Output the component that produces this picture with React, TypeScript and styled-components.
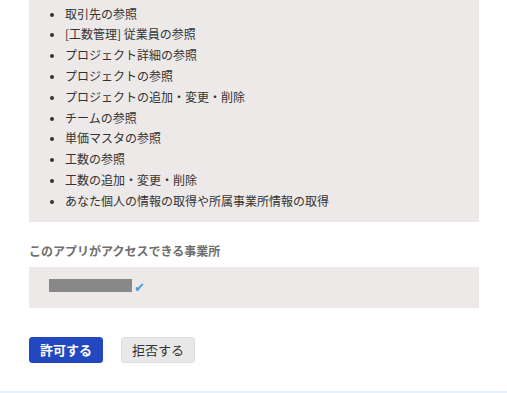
import React from 'react'
import styled, { createGlobalStyle } from 'styled-components'

const GlobalStyle = createGlobalStyle`
  html, body {
    margin: 0;
    padding: 0;
    background: #ffffff;
    overflow: hidden;
  }
  body {
    font-family: "Noto Sans CJK JP", "Noto Sans", "Liberation Sans", sans-serif;
    color: #333333;
  }
`

const Page = styled.div`
  width: 507px;
  height: 393px;
  overflow: hidden;
  display: flex;
  flex-direction: column;
`

// page is scrolled: the scope box starts above the viewport
const Content = styled.div`
  margin-top: -27.2px;
  padding: 0 28px 0 29px;
  display: flex;
  flex-direction: column;
`

const ScopeBox = styled.div`
  background: #ede9e8;
  padding: 10px 0;
`

const ScopeList = styled.ul`
  margin: 0;
  padding: 0 0 0 36px;
  list-style: disc;

  li {
    font-size: 12px;
    line-height: 20.8px;
    color: #333333;
  }

  li::marker {
    font-size: 11px;
  }
`

const SectionLabel = styled.div`
  margin-top: 20.4px;
  font-size: 12px;
  line-height: 18px;
  font-weight: 700;
  color: #6e6e6e;
`

const OfficeBox = styled.div`
  margin-top: 7px;
  height: 41px;
  background: #ede9e8;
  padding: 0 20px 4px;
  box-sizing: border-box;
  display: flex;
  align-items: center;
  gap: 2px;
`

const Redacted = styled.span`
  display: inline-block;
  width: 83px;
  height: 13px;
  background: #888888;
`

const Check = styled.span`
  color: #3d9fe0;
  font-size: 13px;
  line-height: 13px;
  margin-top: 5px;
  font-family: "DejaVu Sans", sans-serif;
`

const Actions = styled.div`
  margin-top: 29px;
  display: flex;
  gap: 18px;
`

const ActionButton = styled.button<{ $primary?: boolean }>`
  width: 74px;
  height: 26px;
  box-sizing: border-box;
  border-radius: 3px;
  border: 1px solid ${p => (p.$primary ? '#2347bf' : '#dddddd')};
  background: ${p => (p.$primary ? '#2347bf' : '#e8e8e8')};
  color: ${p => (p.$primary ? '#ffffff' : '#333333')};
  font-family: inherit;
  font-size: 13px;
  font-weight: ${p => (p.$primary ? 700 : 400)};
  padding: 0;
  cursor: pointer;
`

const Footer = styled.div`
  margin-top: auto;
  height: 2px;
  background: #e6f0fb;
`

const scopes = [
  '[工数管理者] 事業所の参照',
  '取引先の参照',
  '[工数管理] 従業員の参照',
  'プロジェクト詳細の参照',
  'プロジェクトの参照',
  'プロジェクトの追加・変更・削除',
  'チームの参照',
  '単価マスタの参照',
  '工数の参照',
  '工数の追加・変更・削除',
  'あなた個人の情報の取得や所属事業所情報の取得',
]

const App = () => {
  return (
    <Page>
      <GlobalStyle />
      <Content>
        <ScopeBox>
          <ScopeList>
            {scopes.map(s => (
              <li key={s}>{s}</li>
            ))}
          </ScopeList>
        </ScopeBox>
        <SectionLabel>このアプリがアクセスできる事業所</SectionLabel>
        <OfficeBox>
          <Redacted />
          <Check>✔</Check>
        </OfficeBox>
        <Actions>
          <ActionButton $primary type="button">許可する</ActionButton>
          <ActionButton type="button">拒否する</ActionButton>
        </Actions>
      </Content>
      <Footer />
    </Page>
  )
}

export default App
